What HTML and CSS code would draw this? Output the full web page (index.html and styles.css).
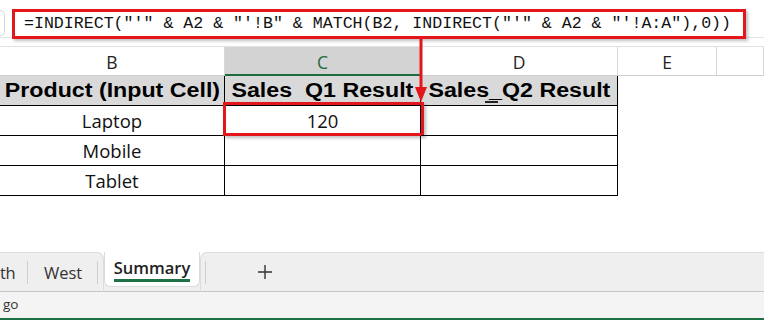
FILE: index.html
```html
<!DOCTYPE html>
<html>
<head>
<meta charset="utf-8">
<link rel="stylesheet" href="styles.css">
</head>
<body>
<div class="app">
  <div class="fbar">
    <div class="namebox"></div>
    <div class="formula">=INDIRECT("'" &amp; A2 &amp; "'!B" &amp; MATCH(B2, INDIRECT("'" &amp; A2 &amp; "'!A:A"),0))</div>
  </div>
  <div class="gap"></div>
  <div class="colheads">
    <div class="ch">B</div>
    <div class="ch sel">C</div>
    <div class="ch">D</div>
    <div class="ch">E</div>
    <div class="ch"></div>
  </div>
  <div class="row">
    <div class="cell t hd"><span class="stretch">Product (Input Cell)</span></div>
    <div class="cell t hd"><span class="stretch pre">Sales  Q1 Result</span></div>
    <div class="cell t hd"><span class="stretch">Sales_Q2 Result</span><span class="dash"></span></div>
    <div class="cell"></div>
    <div class="cell"></div>
  </div>
  <div class="row">
    <div class="cell t">Laptop</div>
    <div class="cell t active">120<span class="redbox"></span></div>
    <div class="cell t"></div>
    <div class="cell"></div>
    <div class="cell"></div>
  </div>
  <div class="row">
    <div class="cell t">Mobile</div>
    <div class="cell t"></div>
    <div class="cell t"></div>
    <div class="cell"></div>
    <div class="cell"></div>
  </div>
  <div class="row">
    <div class="cell t">Tablet</div>
    <div class="cell t"></div>
    <div class="cell t"></div>
    <div class="cell"></div>
    <div class="cell"></div>
  </div>
  <div class="spacer"></div>
  <div class="tabbar">
    <div class="tabs-left">
      <div class="tab first">th</div>
      <div class="sep sep1"></div>
      <div class="tab west">West</div>
      <div class="sep"></div>
    </div>
    <div class="active-wrap"><div class="tab-active"><span class="tab-label">Summary</span></div></div>
    <div class="tabs-right">
      <div class="sep"></div>
      <div class="plus">
        <svg width="16" height="16" viewBox="0 0 16 16"><path d="M8 1v14M1 8h14" stroke="#333" stroke-width="1.4" fill="none"/></svg>
      </div>
    </div>
  </div>
  <div class="status">go</div>
  <svg class="arrow" width="16" height="66" viewBox="0 0 16 66">
    <line x1="8" y1="0" x2="8" y2="52" stroke="#e3161b" stroke-width="3"/>
    <polygon points="2,50 14,50 8,65" fill="#e3161b"/>
  </svg>
</div>
</body>
</html>
```
FILE: styles.css
```css
* { box-sizing: border-box; }
html, body { margin: 0; padding: 0; }
body { width: 764px; height: 320px; overflow: hidden; background: #fff; }
.app {
  position: relative;
  width: 764px;
  height: 320px;
  display: flex;
  flex-direction: column;
  font-family: "Open Sans", "Noto Sans", sans-serif;
  color: #111;
}
.fbar {
  height: 38px;
  display: flex;
  align-items: flex-start;
  border-bottom: 1px solid #e3e3e3;
}
.namebox {
  margin-top: 10px;
  width: 5px;
  height: 26px;
  border: 1px solid #d6d6d6;
  border-left: none;
  border-radius: 0 5px 5px 0;
}
.formula {
  margin-top: 9px;
  margin-left: 7px;
  width: 734px;
  height: 30px;
  border: 3px solid #e3161b;
  box-shadow: 2px 2px 3px rgba(0,0,0,0.25);
  background: #fff;
  font-family: "Liberation Mono", "DejaVu Sans Mono", monospace;
  font-size: 16.6px;
  line-height: 24px;
  padding-left: 9px;
  white-space: pre;
  color: #111;
  position: relative;
  z-index: 1;
}
.gap { height: 8px; }
.colheads, .row {
  display: grid;
  grid-template-columns: 225px 196px 197px 99px 1fr;
}
.colheads {
  height: 30px;
  border-top: 1px solid #e1e1e1;
  border-bottom: 1px solid #cfcfcf;
}
.ch {
  border-right: 1px solid #d9d9d9;
  display: flex;
  align-items: center;
  justify-content: center;
  font-size: 17.5px;
  color: #222;
  padding-top: 2px;
}
.ch.sel {
  background: #d3d3d3;
  color: #1e6b41;
  border-bottom: 2px solid #1e6b41;
  margin-bottom: -1px;
}
.row { height: 30px; }
.cell {
  position: relative;
  display: flex;
  align-items: center;
  justify-content: center;
  font-size: 18.5px;
}
.cell.t {
  border-right: 1px solid #000;
  border-bottom: 1px solid #000;
}
.cell.hd {
  background: #d9d9d9;
  font-family: "Liberation Sans", Arial, sans-serif;
  font-weight: bold;
  font-size: 19.5px;
  color: #000;
}
.stretch {
  display: inline-block;
  transform: scaleX(1.19);
  white-space: nowrap;
}
.pre { white-space: pre; }
.dash {
  position: absolute;
  left: 64px;
  bottom: 2px;
  width: 13px;
  height: 2px;
  background: #222;
}
.redbox {
  position: absolute;
  left: -2px;
  top: -4px;
  width: 201px;
  height: 34px;
  border: 3px solid #e3161b;
  box-shadow: 2px 2px 3px rgba(0,0,0,0.25);
}
.spacer { flex: 1; }
.tabbar {
  height: 40px;
  display: flex;
  font-size: 16.5px;
  color: #333;
}
.tabs-left, .tabs-right {
  background: #efefef;
  border-top: 1px solid #dcdcdc;
  border-bottom: 1px solid #c6c6c6;
  display: flex;
  align-items: center;
}
.tabs-left {
  width: 104px;
  border-top-right-radius: 7px;
  border-right: 1px solid #dcdcdc;
}
.tabs-right {
  flex: 1;
  border-top-left-radius: 7px;
  border-left: 1px solid #dcdcdc;
}
.tab { display: flex; align-items: center; }
.tab.first { width: 11px; white-space: nowrap; letter-spacing: -0.5px; }
.sep {
  width: 1px;
  height: 23px;
  background: #cfcfcf;
}
.sep.sep1 { margin-left: 16px; }
.tab.west { margin-left: 16px; margin-right: 15px; }
.active-wrap {
  width: 96px;
  background: #efefef;
  border-bottom: 1px solid #c6c6c6;
  display: flex;
}
.tab-active {
  width: 100%;
  height: 35px;
  background: #fff;
  border: 1px solid #dcdcdc;
  border-top: none;
  border-radius: 0 0 6px 6px;
  display: flex;
  justify-content: center;
  align-items: center;
}
.tab-label {
  font-weight: 600;
  color: #222;
  border-bottom: 3px solid #1e7145;
  line-height: 22px;
  margin-top: 1px;
}
.tabs-right .sep { margin-left: 4px; }
.plus {
  margin-left: 51px;
  display: flex;
  align-items: center;
}
.status {
  height: 28px;
  background: #f4f4f4;
  border-bottom: 2px solid #1e7145;
  font-size: 13.5px;
  color: #333;
  padding-left: 3px;
  line-height: 24px;
}
.arrow {
  position: absolute;
  left: 413px;
  top: 37px;
  z-index: 2;
}
```
